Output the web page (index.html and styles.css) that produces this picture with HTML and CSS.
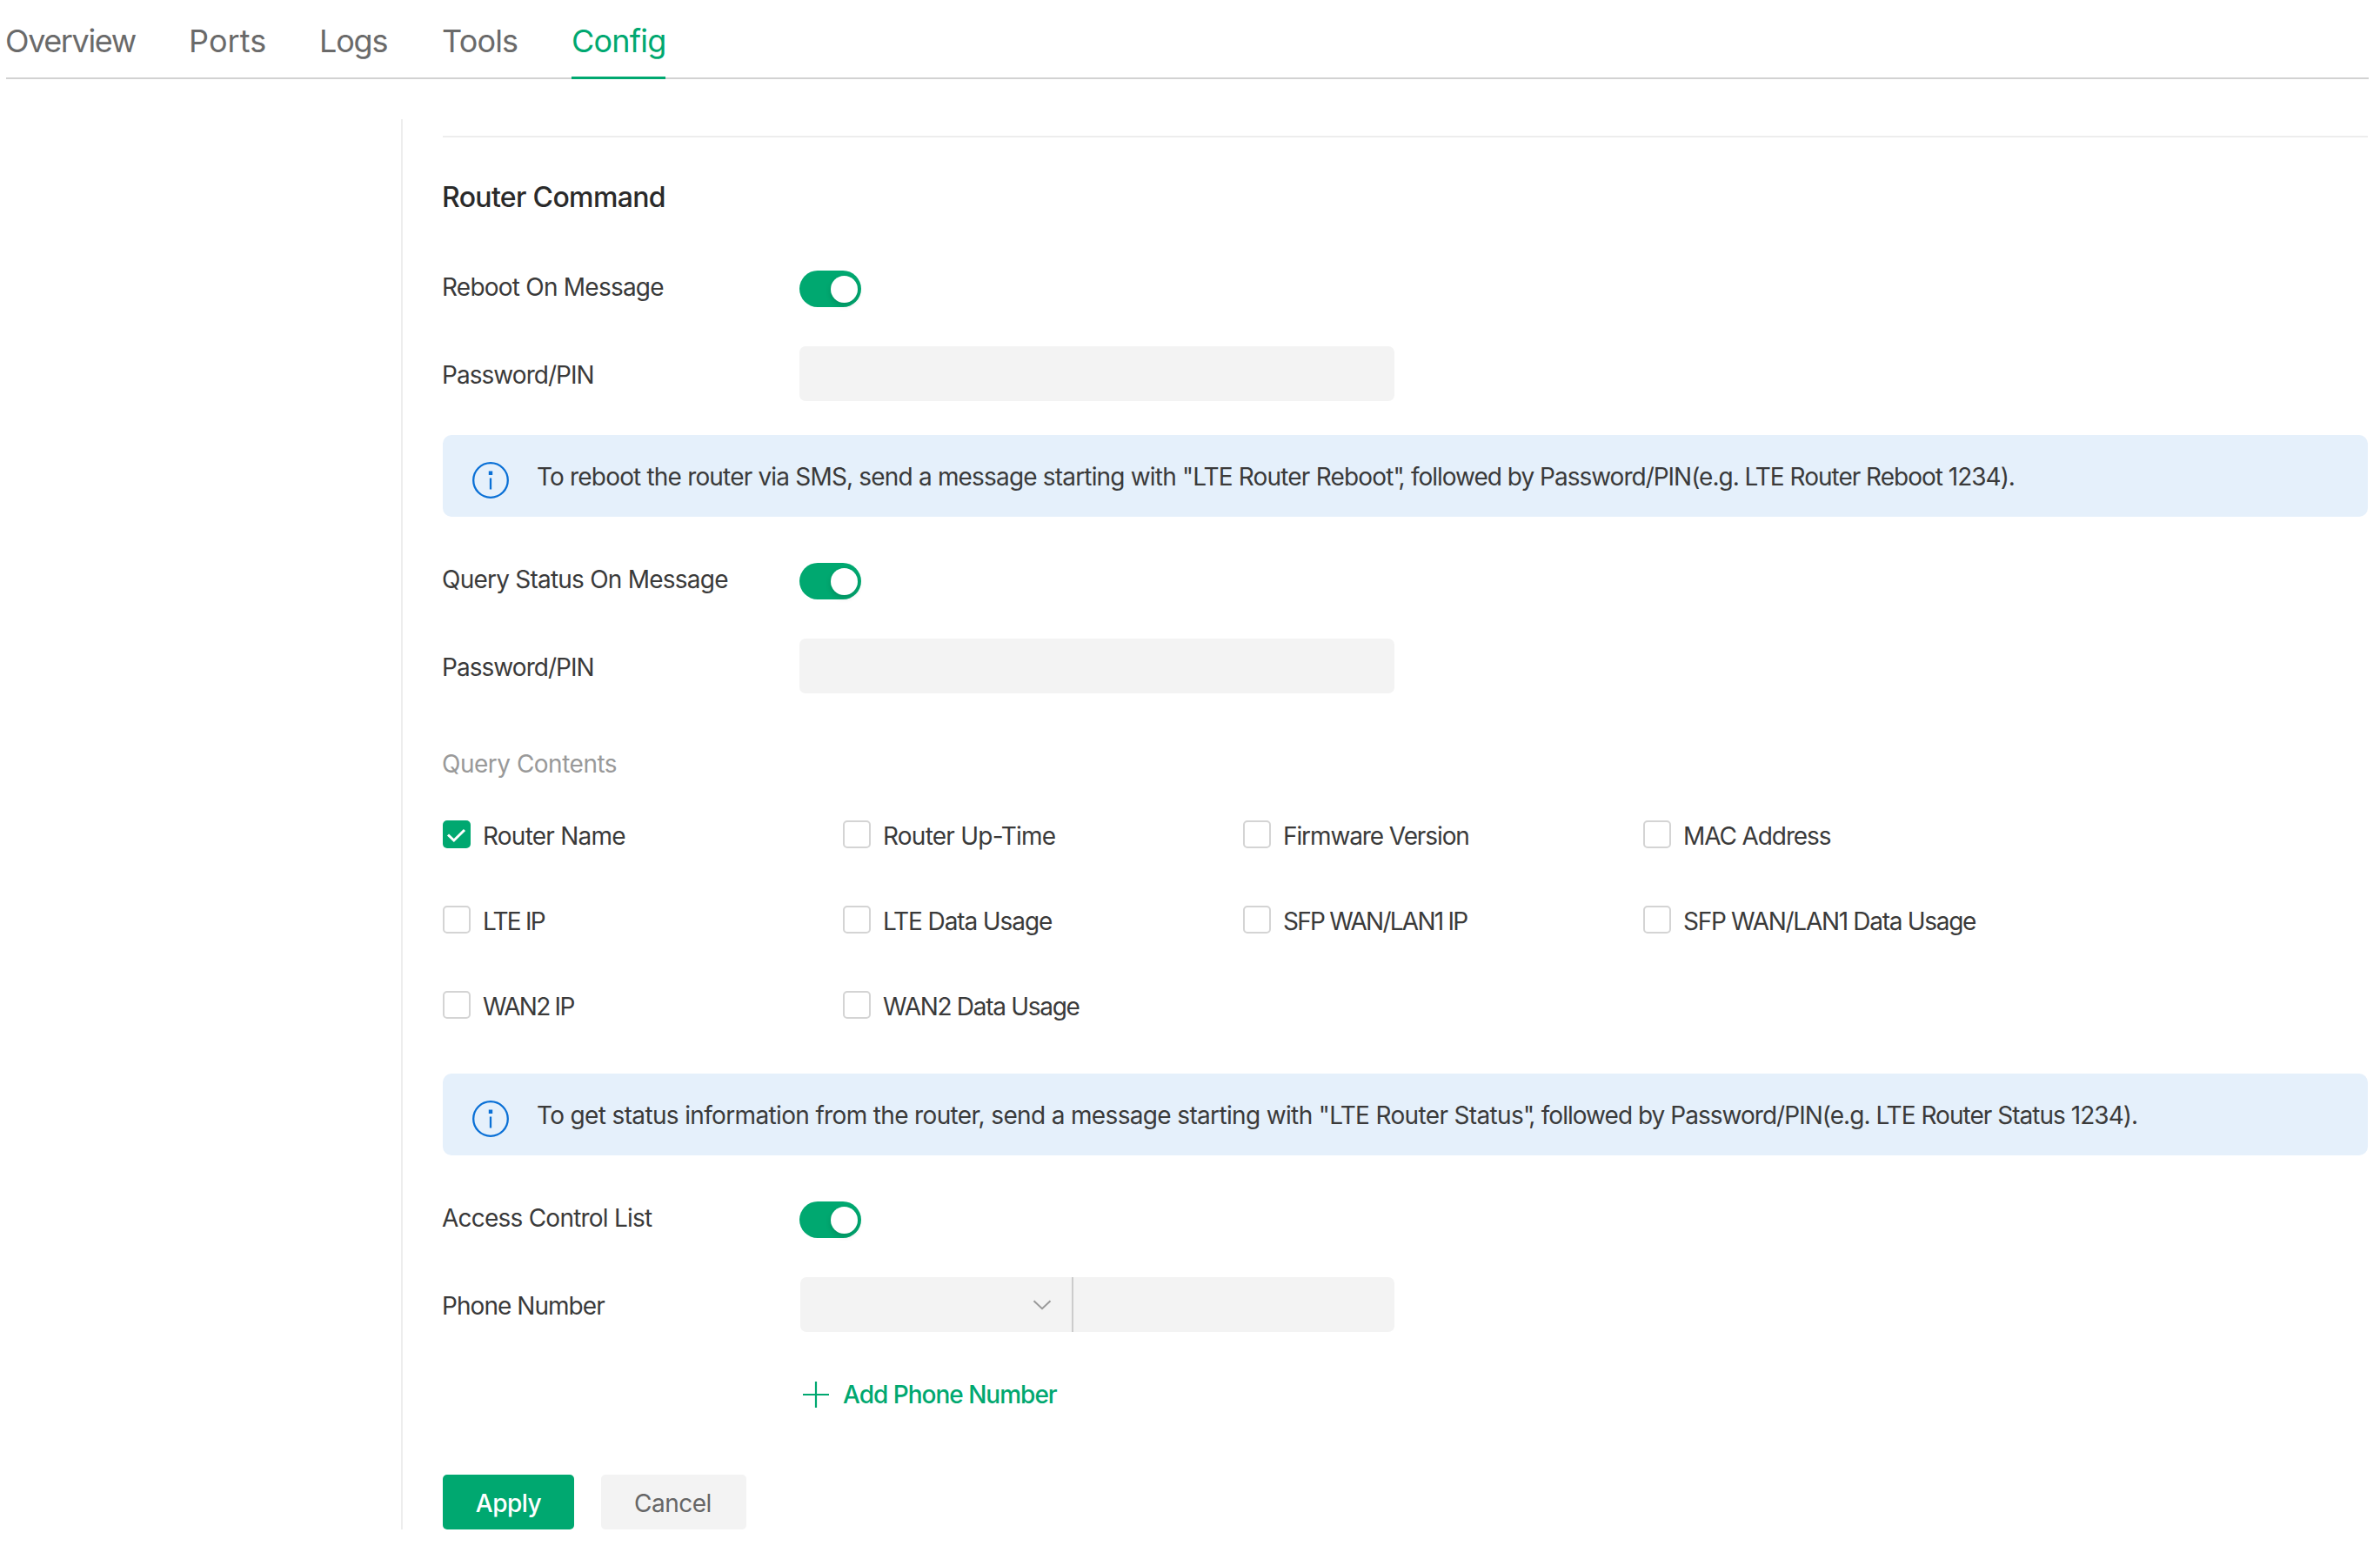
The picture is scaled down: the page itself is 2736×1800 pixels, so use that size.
FILE: index.html
```
<!DOCTYPE html>
<html lang="en">
<head>
    <meta charset="UTF-8">
    <title>Config</title>
    <link rel="stylesheet" href="styles.css">
</head>
<body>

<nav class="tabs">
    <a class="tab tab-overview">Overview</a>
    <a class="tab tab-ports">Ports</a>
    <a class="tab tab-logs">Logs</a>
    <a class="tab tab-tools">Tools</a>
    <a class="tab tab-config active">Config</a>
</nav>

<main class="content">
    <hr class="divider">
    <h2>Router Command</h2>

    <div class="row row-switch">
        <span class="label">Reboot On Message</span>
        <span class="switch"></span>
    </div>
    <div class="row row-input">
        <span class="label pin">Password/PIN</span>
        <input class="input" type="text">
    </div>

    <div class="alert">
        <svg class="info" viewBox="0 0 42 42" fill="none" stroke="#0a70d6">
            <circle cx="21" cy="21" r="19.8" stroke-width="2.3"/>
            <path d="M21 18.5V31.5" stroke-width="2.3"/>
            <path d="M21 10.5V15" stroke-width="4.4"/>
        </svg>
        <p class="tip reboot-tip">To reboot the router via SMS, send a message starting with "LTE Router Reboot<span class="quote">"</span>, <span class="tail">followed by Password/PIN(e.g. LTE Router Reboot 1234).</span></p>
    </div>

    <div class="row row-switch after-alert">
        <span class="label">Query Status On Message</span>
        <span class="switch"></span>
    </div>
    <div class="row row-input">
        <span class="label pin">Password/PIN</span>
        <input class="input" type="text">
    </div>

    <div class="subtitle">Query Contents</div>
    <div class="checks">
        <label class="check">
            <span class="box checked">
                <svg viewBox="0 0 32 32" fill="none" stroke="#fff" stroke-width="3"><path d="M6 16.5l6.8 6.5L25 11"/></svg>
            </span>
            <span>Router Name</span>
        </label>
        <label class="check"><span class="box"></span><span>Router Up-Time</span></label>
        <label class="check"><span class="box"></span><span class="snug">Firmware Version</span></label>
        <label class="check"><span class="box"></span><span class="snug">MAC Address</span></label>
        <label class="check"><span class="box"></span><span class="tight">LTE IP</span></label>
        <label class="check"><span class="box"></span><span class="snug">LTE Data Usage</span></label>
        <label class="check"><span class="box"></span><span class="tight">SFP WAN/LAN1 IP</span></label>
        <label class="check"><span class="box"></span><span class="wan">SFP WAN/LAN1 Data Usage</span></label>
        <label class="check"><span class="box"></span><span class="tight">WAN2 IP</span></label>
        <label class="check"><span class="box"></span><span class="wan">WAN2 Data Usage</span></label>
    </div>

    <div class="alert alert-status">
        <svg class="info" viewBox="0 0 42 42" fill="none" stroke="#0a70d6">
            <circle cx="21" cy="21" r="19.8" stroke-width="2.3"/>
            <path d="M21 18.5V31.5" stroke-width="2.3"/>
            <path d="M21 10.5V15" stroke-width="4.4"/>
        </svg>
        <p class="tip status-tip">To get status information from the router, send a message starting with "LTE Router Status<span class="quote">"</span>, <span class="tail">followed by Password/PIN(e.g. LTE Router Status 1234).</span></p>
    </div>

    <div class="row row-switch after-alert">
        <span class="label">Access Control List</span>
        <span class="switch"></span>
    </div>
    <div class="row row-input">
        <span class="label pin">Phone Number</span>
        <div class="phone">
            <div class="select">
                <svg viewBox="0 0 22 12" fill="none" stroke="#999" stroke-width="2"><path d="M1.5 1.2l9.5 9 9.5-9"/></svg>
            </div>
            <input class="phone-input" type="text">
        </div>
    </div>

    <a class="add">
        <svg viewBox="0 0 30 30" stroke="#00a870" stroke-width="2.2"><path d="M15 0v30M0 15h30"/></svg>
        <span>Add Phone Number</span>
    </a>

    <div class="actions">
        <button class="apply">Apply</button>
        <button class="cancel">Cancel</button>
    </div>
</main>

</body>
</html>
```
FILE: styles.css
```
* {
    box-sizing: border-box;
}
body {
    margin: 0;
    background: #fff;
    color: #3a3a3a;
    font-family: Inter, "Liberation Sans", sans-serif;
    font-size: 28px;
    letter-spacing: -0.77px;
    white-space: nowrap;
}

/* tabs */
.tabs {
    display: grid;
    grid-template-columns: 210px 151px 141px 148px 108px;
    height: 91px;
    margin: 0 13px 0 7px;
    box-shadow: inset 0 -2px #d2d2d2;
}
.tab {
    padding-top: 25px;
    font-size: 36px;
    line-height: 44px;
    color: #6a6a6a;
}
.tab-overview {
    letter-spacing: -1.4px;
    margin-left: -1px;
}
.tab-ports {
    letter-spacing: 0.1px;
}
.tab-logs {
    letter-spacing: -1.2px;
    margin-left: -1px;
}
.tab-tools {
    letter-spacing: -0.8px;
    margin-left: -1px;
}
.tab-config {
    letter-spacing: -0.8px;
}
.tab.active {
    color: #00a870;
    border-bottom: 3px solid #00a870;
}

/* content */
.content {
    margin: 46px 14px 0 461px;
    padding: 19px 0 0 46px;
    border-left: 2px solid #ededed;
}
.divider {
    height: 2px;
    margin: 0;
    border: none;
    background: #ededed;
}
h2 {
    margin: 49px 0 64px -1px;
    font-size: 32px;
    font-weight: 450;
    line-height: 40px;
    letter-spacing: -0.65px;
    color: #2a2a2a;
}
.row {
    display: flex;
    align-items: flex-start;
}
.row-switch {
    height: 42px;
}
.row-input {
    height: 63px;
    margin-top: 45px;
}
.label {
    width: 410px;
    line-height: 38px;
    margin-left: -1px;
    margin-right: 1px;
}
.row-input .label {
    line-height: 66px;
}
.pin {
    letter-spacing: -0.95px;
}
.switch {
    width: 71px;
    height: 42px;
    padding: 6px 4px;
    border-radius: 21px;
    background: #00a870;
}
.switch::after {
    content: "";
    display: block;
    width: 31px;
    height: 31px;
    margin-left: auto;
    border-radius: 50%;
    background: #fff;
    box-shadow: 0 3px 6px rgba(0, 0, 0, 0.15);
}
.input {
    width: 684px;
    height: 63px;
    border: none;
    border-radius: 7px;
    background: #f3f3f3;
}

.alert {
    display: flex;
    align-items: center;
    height: 94px;
    margin-top: 39px;
    padding-left: 34px;
    border-radius: 10px;
    background: #e5f0fb;
}
.info {
    width: 42px;
    height: 42px;
    margin: 9px 32px 0 0;
}
.tip {
    margin: 2px 0 0;
}
.reboot-tip {
    letter-spacing: -0.82px;
}
.reboot-tip .tail {
    letter-spacing: -1px;
}
.status-tip {
    letter-spacing: -0.65px;
}
.status-tip .tail {
    letter-spacing: -0.97px;
}
/* pulls the comma under the closing quote */
.tip .quote {
    letter-spacing: -7px;
}
.after-alert {
    margin-top: 53px;
}

.subtitle {
    margin: 63px 0 47px -1px;
    line-height: 36px;
    letter-spacing: -0.5px;
    color: #999;
}
.checks {
    display: grid;
    grid-template-columns: repeat(4, 460px);
    grid-auto-rows: 32px;
    row-gap: 66px;
}
.check {
    display: flex;
    gap: 14px;
    line-height: 36px;
}
.box {
    width: 32px;
    height: 32px;
    border: 2px solid #d4d4d4;
    border-radius: 5px;
}
.box.checked {
    border: none;
    background: #00a870;
}
.box svg {
    display: block;
}
.snug {
    letter-spacing: -1.1px;
}
.wan {
    letter-spacing: -1.3px;
}
.tight {
    letter-spacing: -1.75px;
}
.alert-status {
    margin-top: 63px;
}

.phone {
    display: flex;
    width: 683px;
    height: 63px;
    margin-left: 1px;
    border-radius: 7px;
    background: #f3f3f3;
}
.select {
    display: flex;
    align-items: center;
    justify-content: flex-end;
    width: 314px;
    padding-right: 23px;
    border-right: 2px solid #ccc;
}
.select svg {
    width: 22px;
    height: 12px;
}
.phone-input {
    flex: 1;
    min-width: 0;
    border: none;
    background: none;
}
.add {
    display: flex;
    align-items: center;
    gap: 16px;
    height: 36px;
    margin: 54px 0 74px 414px;
    font-weight: 500;
    letter-spacing: -1px;
    color: #00a870;
}
.add svg {
    width: 30px;
    height: 30px;
}

.actions {
    display: flex;
    gap: 31px;
}
.actions button {
    height: 63px;
    padding: 2px 0 0;
    border: none;
    border-radius: 5px;
    font-family: inherit;
    font-size: 28px;
    letter-spacing: -0.5px;
}
.actions .apply {
    width: 151px;
    background: #00a870;
    color: #fff;
    font-weight: 500;
}
.actions .cancel {
    width: 167px;
    padding-right: 2px;
    background: #f3f3f3;
    color: #666;
}
```
